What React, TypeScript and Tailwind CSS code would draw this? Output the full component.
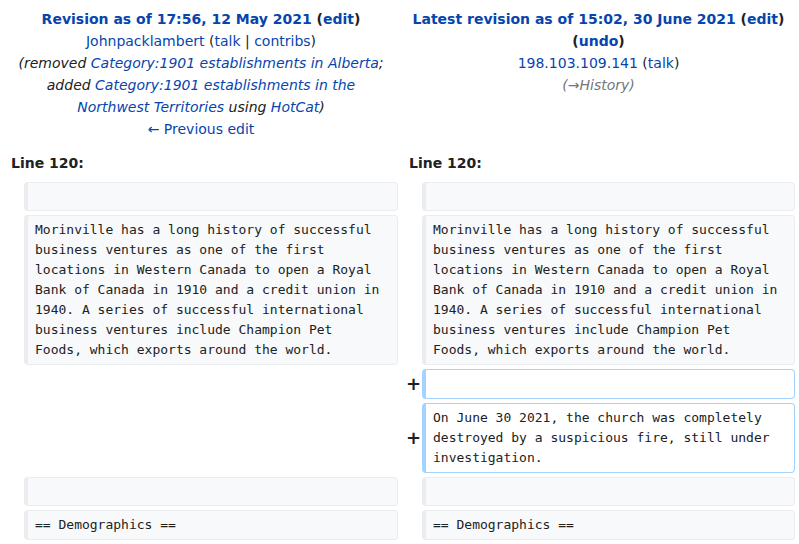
import React from "react";

const link = "text-[#0645ad]";

function Context({ text }: { text?: string }) {
  if (!text) {
    return <div className="border border-[#eaecf0] border-l-4 rounded-[4px] bg-[#f8f9fa] h-[29px]" />;
  }
  return (
    <div className="border border-[#eaecf0] border-l-4 rounded-[4px] bg-[#f8f9fa] pl-[7px] pr-[13px] py-1 text-[13px] leading-5 text-[#202122] whitespace-pre-wrap font-['DejaVu_Sans_Mono',monospace]">
      {text}
    </div>
  );
}

function Added({ text }: { text?: string }) {
  if (!text) {
    return <div className="border border-[#a3d3ff] border-l-4 rounded-[4px] bg-white h-[30px]" />;
  }
  return (
    <div className="border border-[#a3d3ff] border-l-4 rounded-[4px] bg-white pl-[7px] pr-[13px] py-1 text-[13px] leading-5 text-[#202122] whitespace-pre-wrap font-['DejaVu_Sans_Mono',monospace]">
      {text}
    </div>
  );
}

function Marker({ sign }: { sign?: string }) {
  return (
    <div className="flex items-center justify-end -mr-[3px] font-bold text-[18px] text-[#202122] leading-none">
      {sign}
    </div>
  );
}

const para =
  "Morinville has a long history of successful business ventures as one of the first locations in Western Canada to open a Royal Bank of Canada in 1910 and a credit union in 1940. A series of successful international business ventures include Champion Pet Foods, which exports around the world.";

export default function App() {
  return (
    <div className="w-[799px] h-[544px] overflow-hidden bg-white font-['DejaVu_Sans',sans-serif] text-[#202122] text-[14px]">
      <div className="grid grid-cols-[16px_374px_16px_373px] gap-1 p-1">
        <div className="col-span-2 text-center leading-[22px] px-1.5 py-1">
          <div className="font-bold">
            <span className={link}>Revision as of 17:56, 12 May 2021</span> (<span className={link}>edit</span>)
          </div>
          <div>
            <span className={link}>Johnpacklambert</span> (<span className={link}>talk</span> | <span className={link}>contribs</span>)
          </div>
          <div className="italic">
            (removed <span className={link}>Category:1901 establishments in Alberta</span>; added{" "}
            <span className={link}>Category:1901 establishments in the Northwest Territories</span> using{" "}
            <span className={link}>HotCat</span>)
          </div>
          <div className={link}>← Previous edit</div>
        </div>
        <div className="col-span-2 text-center leading-[22px] px-1.5 py-1">
          <div className="font-bold">
            <span className={link}>Latest revision as of 15:02, 30 June 2021</span> (<span className={link}>edit</span>) (<span className={link}>undo</span>)
          </div>
          <div>
            <span className={link}>198.103.109.141</span> (<span className={link}>talk</span>)
          </div>
          <div className="italic text-[#72777d]">(→History)</div>
        </div>

        <div className="col-span-2 font-bold leading-[22px] px-[7px] py-1">Line 120:</div>
        <div className="col-span-2 font-bold leading-[22px] px-[7px] py-1">Line 120:</div>

        <Marker />
        <Context />
        <Marker />
        <Context />

        <Marker />
        <Context text={para} />
        <Marker />
        <Context text={para} />

        <div className="col-span-2" />
        <Marker sign="+" />
        <Added />

        <div className="col-span-2" />
        <Marker sign="+" />
        <Added text="On June 30 2021, the church was completely destroyed by a suspicious fire, still under investigation." />

        <Marker />
        <Context />
        <Marker />
        <Context />

        <Marker />
        <Context text="== Demographics ==" />
        <Marker />
        <Context text="== Demographics ==" />
      </div>
    </div>
  );
}
